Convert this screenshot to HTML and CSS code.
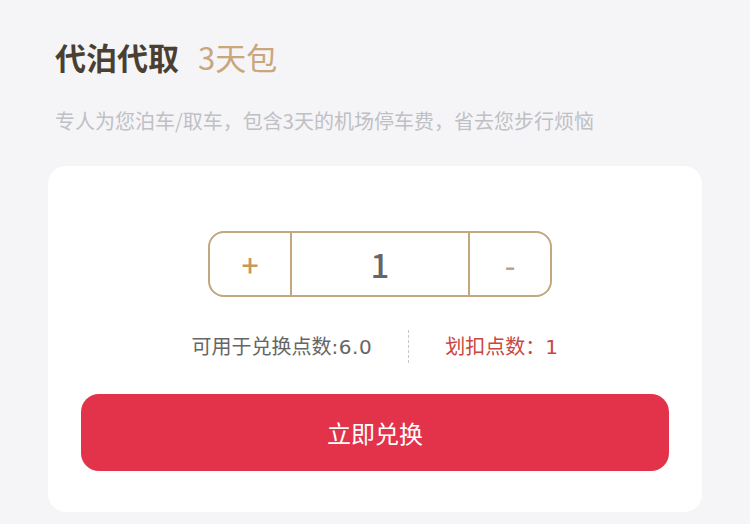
FILE: index.html
```html
<!DOCTYPE html>
<html lang="zh-CN">
<head>
<meta charset="utf-8">
<link rel="stylesheet" href="styles.css">
</head>
<body>
<div class="page">
  <header class="head">
    <h1 class="title"><span class="title-main">代泊代取</span><span class="title-sub">3天包</span></h1>
    <p class="desc">专人为您泊车/取车，包含3天的机场停车费，省去您步行烦恼</p>
  </header>
  <section class="card">
    <div class="stepper-wrap">
      <div class="stepper">
        <div class="step-btn plus">+</div>
        <div class="step-val">1</div>
        <div class="step-btn minus">-</div>
      </div>
    </div>
    <div class="info">
      <span class="avail">可用于兑换点数<span class="num">:6.0</span></span>
      <span class="sep"></span>
      <span class="deduct">划扣点数：<span class="num">1</span></span>
    </div>
    <button class="submit">立即兑换</button>
  </section>
</div>
</body>
</html>
```
FILE: styles.css
```css
html, body {
  margin: 0;
  padding: 0;
}
body {
  background: #f5f5f8;
  font-family: "Noto Sans CJK SC", "Noto Sans", sans-serif;
  width: 750px;
  height: 524px;
  overflow: hidden;
}
.page {
  display: flex;
  flex-direction: column;
}
.head {
  padding: 37px 0 0 55px;
}
.title {
  margin: 0;
  font-size: 31px;
  line-height: 40px;
  display: flex;
  gap: 19px;
}
.title-main {
  font-weight: 700;
  color: #4b3f32;
}
.title-sub {
  font-weight: 400;
  color: #c9a67c;
}
.desc {
  margin: 30px 0 0 0;
  font-size: 20px;
  line-height: 28px;
  color: #c0c0c4;
}
.card {
  margin: 31px 0 0 48px;
  width: 654px;
  height: 346px;
  box-sizing: border-box;
  background: #ffffff;
  border-radius: 18px;
  padding: 65px 33px 0 33px;
  display: flex;
  flex-direction: column;
}
.stepper-wrap {
  display: flex;
  justify-content: center;
  padding-left: 10px;
}
.stepper {
  display: flex;
  width: 344px;
  height: 66px;
  box-sizing: border-box;
  border: 2px solid #c3a77e;
  border-radius: 16px;
}
.step-btn {
  width: 80px;
  display: flex;
  align-items: center;
  justify-content: center;
  font-size: 30px;
  font-weight: 500;
}
.plus {
  color: #c8985c;
}
.minus {
  color: #bba587;
}
.step-val {
  flex: 1;
  display: flex;
  align-items: center;
  justify-content: center;
  border-left: 2px solid #c3a77e;
  border-right: 2px solid #c3a77e;
  font-size: 33px;
  font-weight: 500;
  color: #666666;
}
.info {
  margin-top: 33px;
  height: 33px;
  display: flex;
  justify-content: center;
  align-items: center;
  gap: 36px;
  font-size: 20px;
  line-height: 28px;
}
.num {
  font-family: "DejaVu Sans", "Noto Sans", sans-serif;
  font-size: 20px;
  letter-spacing: 0.5px;
}
.avail {
  color: #666666;
}
.deduct {
  color: #c9473f;
}
.sep {
  width: 0;
  height: 33px;
  border-left: 1px dashed #c8c8c8;
}
.submit {
  margin-top: 31px;
  height: 77px;
  border: none;
  border-radius: 18px;
  background: #e2334a;
  color: #ffffff;
  font-family: "Noto Sans CJK SC", "Noto Sans", sans-serif;
  font-size: 24px;
  padding: 0;
}
```
